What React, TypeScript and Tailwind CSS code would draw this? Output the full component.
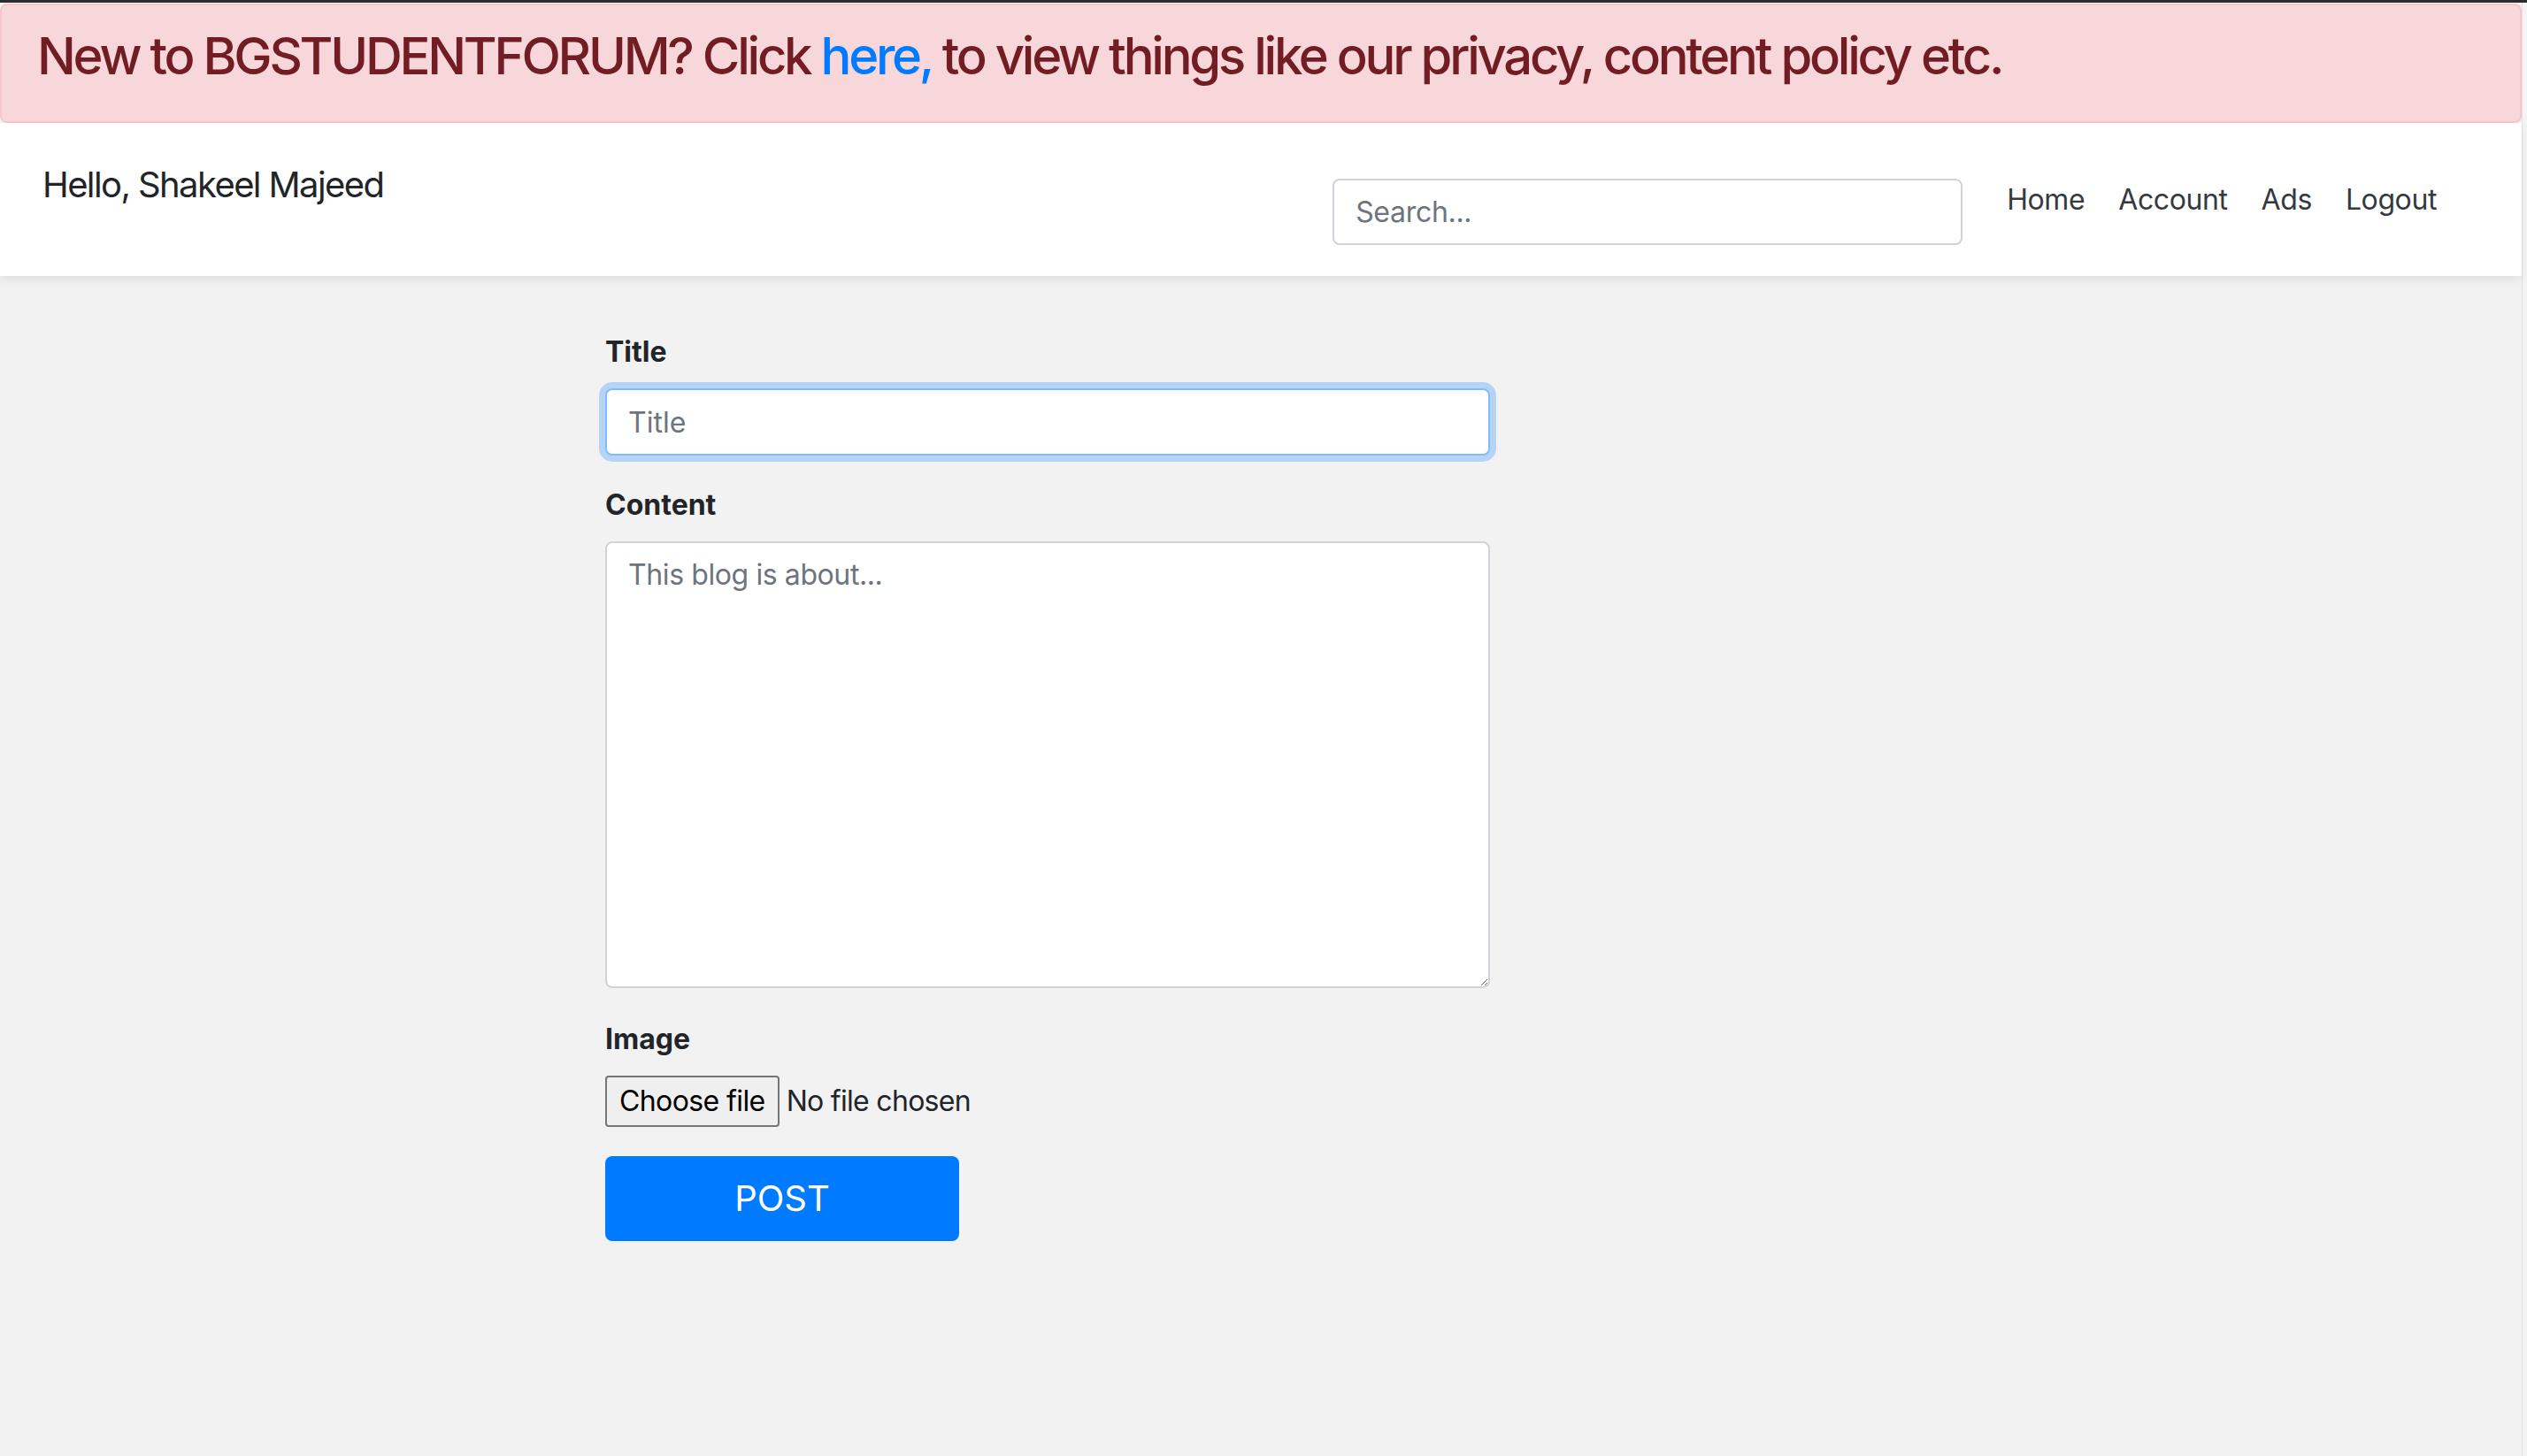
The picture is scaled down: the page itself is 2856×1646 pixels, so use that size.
import React from "react";

export default function App() {
  const font = { fontFamily: "Inter, 'Noto Sans', sans-serif" };
  return (
    <div className="flex min-h-[1646px] w-full flex-col bg-[#f2f2f2]" style={font}>
      <div className="h-[3px] w-full bg-[#2c2c2c]" />
      <div className="flex flex-1 flex-row">
        <div className="flex flex-1 flex-col">
          <div className="mt-[1px] rounded-[8px] border-2 border-[#f5c6cb] bg-[#f8d7da] pb-[45px] pl-[40px] pt-[28px] text-[58px] font-medium leading-none tracking-[-3.25px] text-[#721c24]">
            New to BGSTUDENTFORUM? Click <a className="text-[#007bff]">here,</a> to view things like our privacy, content policy etc.
          </div>
          <nav className="relative z-10 flex h-[173px] flex-row items-start bg-white pl-[48px] pr-[96px] pt-[50px] shadow-[0_5px_10px_rgba(0,0,0,0.07)]">
            <div className="text-[40px] leading-none tracking-[-1.6px] text-[#212529]">Hello, Shakeel Majeed</div>
            <div className="ml-auto mt-[13px] flex h-[75px] w-[712px] items-center rounded-[8px] border-2 border-[#ced4da] bg-white pl-[24px] text-[32px] tracking-[-0.3px] text-[#6c757d]">
              Search...
            </div>
            <div className="ml-[50px] mt-[21px] flex flex-row gap-[38px] text-[32px] leading-none tracking-[-0.4px] text-[#343a40]">
              <span>Home</span>
              <span>Account</span>
              <span>Ads</span>
              <span>Logout</span>
            </div>
          </nav>
          <main className="flex flex-col pl-[684px] pt-[70px]">
            <div className="flex w-[1000px] flex-col">
              <label className="text-[32px] font-bold leading-none text-[#212529]">Title</label>
              <input
                placeholder="Title"
                className="mt-[25px] h-[76px] w-[1000px] rounded-[8px] border-2 border-[#80bdff] bg-white px-[24px] text-[32px] text-[#495057] shadow-[0_0_0_7px_rgba(0,123,255,0.25)] outline-none placeholder:text-[#6c757d]"
              />
              <label className="mt-[40px] text-[32px] font-bold leading-none text-[#212529]">Content</label>
              <textarea
                placeholder="This blog is about..."
                className="mt-[25px] h-[505px] w-[1000px] rounded-[8px] border-2 border-[#ced4da] bg-white px-[24px] py-[12px] text-[32px] leading-[1.5] tracking-[-0.4px] text-[#495057] outline-none placeholder:text-[#6c757d]"
              />
              <label className="mt-[42px] text-[32px] font-bold leading-none text-[#212529]">Image</label>
              <div className="mt-[25px] flex flex-row items-center">
                <div className="flex h-[58px] items-center rounded-[4px] border-2 border-[#767676] bg-[#efefef] px-[14px] text-[32px] tracking-[-0.6px] text-black">
                  Choose file
                </div>
                <span className="ml-[8px] text-[32px] tracking-[-0.7px] text-[#212529]">No file chosen</span>
              </div>
              <button className="mt-[33px] flex h-[96px] w-[400px] items-center justify-center rounded-[8px] bg-[#007bff] text-[40px] text-white">
                POST
              </button>
            </div>
          </main>
        </div>
        <div className="w-[6px] border-l border-[#e2e2e2] bg-[#f4f4f4]" />
      </div>
    </div>
  );
}
